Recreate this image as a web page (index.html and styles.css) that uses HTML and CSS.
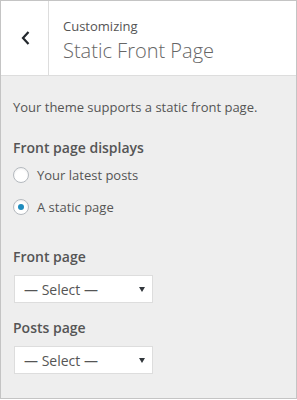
FILE: index.html
```html
<!DOCTYPE html>
<html>
    <head>
        <title>Customizing Static Front Page</title>
        <meta name="viewport" content="width=device-width">
        <link rel="stylesheet" href="styles.css">
    </head>

    <body>
        <div class="panel">
            <header class="panel-header">
                <button class="back" type="button" aria-label="Back">
                    <svg width="10" height="16" viewBox="0 0 10 16">
                        <polyline points="7.5,2 2,8 7.5,14" fill="none" stroke="#23282d" stroke-width="2.2" />
                    </svg>
                </button>
                <div class="titles">
                    <span class="context">Customizing</span>
                    <h1>Static Front Page</h1>
                </div>
            </header>

            <section class="panel-body">
                <p class="description">Your theme supports a static front page.</p>

                <h2 class="field-title">Front page displays</h2>
                <label class="choice">
                    <input type="radio" name="show_on_front" value="posts">
                    Your latest posts
                </label>
                <label class="choice">
                    <input type="radio" name="show_on_front" value="page" checked>
                    A static page
                </label>

                <div class="field">
                    <label class="field-title" for="page-on-front">Front page</label>
                    <div class="dropdown">
                        <select id="page-on-front">
                            <option>&mdash; Select &mdash;</option>
                        </select>
                    </div>
                </div>

                <div class="field">
                    <label class="field-title" for="page-for-posts">Posts page</label>
                    <div class="dropdown">
                        <select id="page-for-posts">
                            <option>&mdash; Select &mdash;</option>
                        </select>
                    </div>
                </div>
            </section>
        </div>
    </body>
</html>
```

FILE: styles.css
```css
body {
    margin: 0;
    color: #555;
    font-family: "Open Sans", "Liberation Sans", sans-serif;
    font-size: 13px;
    line-height: 18px;
}

.panel {
    width: 297px;
    height: 399px;
    box-sizing: border-box;
    border: 1px solid #c4c4c4;
    background-color: #eee;
}

.panel-header {
    display: flex;
    height: 74px;
    background-color: #fff;
    border-bottom: 1px solid #ddd;
}

.back {
    display: flex;
    align-items: center;
    justify-content: center;
    width: 48px;
    padding: 0 0 0 2px;
    margin: 0;
    border: 0;
    border-right: 1px solid #ddd;
    background: none;
}

.titles {
    padding: 16px 0 0 14px;
}

.context {
    display: block;
    font-size: 13px;
    line-height: 19px;
}

.titles > h1 {
    margin: 1px 0 0;
    color: #666;
    font-size: 20px;
    font-weight: 300;
    line-height: 28px;
}

.panel-body {
    padding: 22px 12px 0;
}

.description {
    margin: 0 0 22px;
}

.field-title {
    display: block;
    margin: 0 0 1px;
    font-size: 14px;
    font-weight: 600;
    line-height: 20px;
}

.choice {
    display: flex;
    align-items: center;
    gap: 8px;
    height: 32px;
}

.choice > input {
    appearance: none;
    -webkit-appearance: none;
    display: flex;
    align-items: center;
    justify-content: center;
    width: 16px;
    height: 16px;
    margin: 0;
    border: 1px solid #b4b9be;
    border-radius: 50%;
    background-color: #fff;
    box-shadow: inset 0 1px 2px rgba(0, 0, 0, 0.07);
}

.choice > input:checked::before {
    content: "";
    width: 6px;
    height: 6px;
    border-radius: 50%;
    background-color: #1e8cbe;
}

.field {
    margin-top: 24px;
}

.field + .field {
    margin-top: 15px;
}

.field > .field-title {
    margin-bottom: 8px;
}

.dropdown {
    position: relative;
    width: 139px;
    margin-left: 1px;
}

.dropdown > select {
    appearance: none;
    -webkit-appearance: none;
    display: block;
    width: 100%;
    height: 28px;
    margin: 0;
    padding: 0 20px 0 9px;
    border: 1px solid #ddd;
    border-radius: 0;
    background-color: #fff;
    color: #555;
    font-family: inherit;
    font-size: 14px;
}

.dropdown::after {
    content: "";
    position: absolute;
    top: 12px;
    right: 8px;
    border-left: 3px solid transparent;
    border-right: 3px solid transparent;
    border-top: 5px solid #32373c;
    pointer-events: none;
}
```
